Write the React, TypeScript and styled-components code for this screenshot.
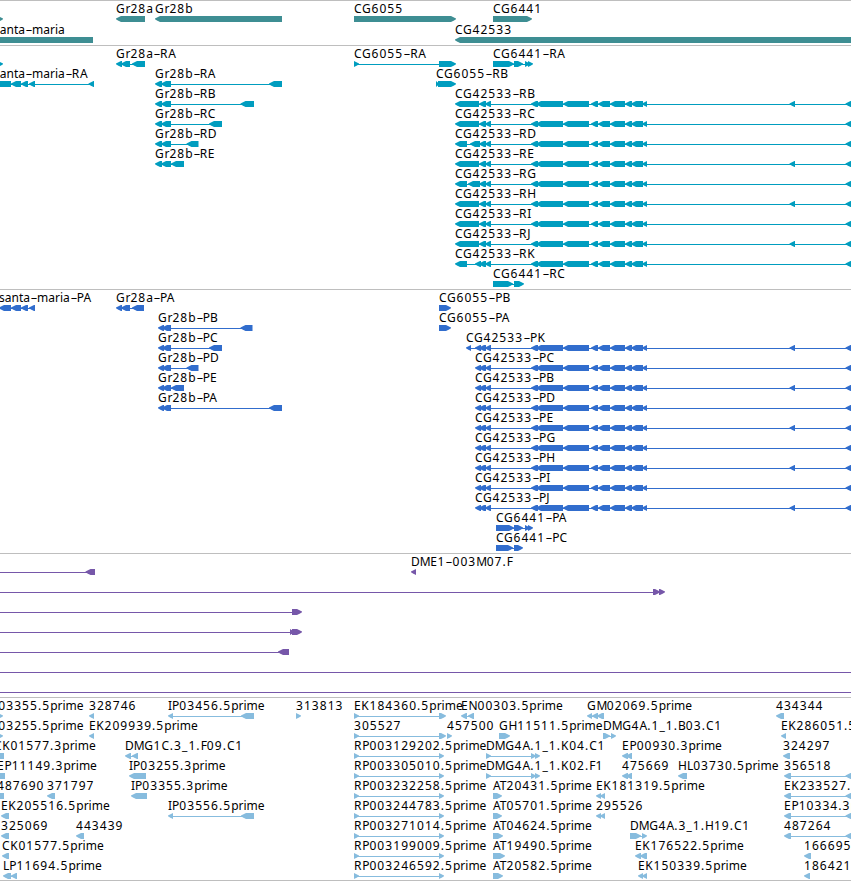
import React from "react";
import styled, { createGlobalStyle } from "styled-components";

type Block = [number, number];

interface FeatureData {
  at: number;
  label?: string;
  blocks: Block[];
  forward?: boolean;
}

interface TrackData {
  id: string;
  color: string;
  pitch: number;
  height: number;
  rows: FeatureData[][];
}

const GlobalStyle = createGlobalStyle`
  body {
    margin: 0;
    background: #fff;
  }
`;

const Browser = styled.main`
  width: 851px;
  height: 881px;
  overflow: hidden;
  display: flex;
  flex-direction: column;
  background: #fff;
  color: #000;
  font-family: "Noto Sans", "Open Sans", sans-serif;
  font-size: 12px;
`;

const TrackBox = styled.section<{ $height: number; $color: string }>`
  flex: none;
  box-sizing: border-box;
  height: ${(p) => p.$height}px;
  border-top: 1px solid #bebebe;
  color: ${(p) => p.$color};
`;

const EndLine = styled.div`
  flex: none;
  height: 1px;
  background: #bebebe;
`;

const Row = styled.div<{ $pitch: number }>`
  position: relative;
  height: ${(p) => p.$pitch}px;
`;

const FeatureBox = styled.div`
  position: absolute;
  top: 0;
  display: flex;
  flex-direction: column;
`;

const Label = styled.span`
  height: 15px;
  line-height: 15px;
  white-space: pre;
  color: #000;
`;

const Run = styled.span<{ $spacing: number }>`
  letter-spacing: ${(p) => p.$spacing}px;
`;

const Dash = styled.span`
  display: inline-block;
  width: 4px;
  margin: 0 1px 0 2px;
  transform: scaleX(1.8);
`;

const Glyph = styled.svg`
  display: block;
  flex: none;
  overflow: visible;
`;

const f = (at: number, label: string, blocks: Block[], forward = false): FeatureData => ({
  at,
  label,
  blocks,
  forward,
});

const r = (at: number, label: string, blocks: Block[]) => f(at, label, blocks, true);

// exons shared by every CG42533 isoform
const common = (extra: boolean): Block[] => [
  [479, 486],
  [485, 491],
  [531, 538],
  [536, 563],
  [563, 589],
  [591, 598],
  [598, 610],
  [610, 625],
  [625, 632],
  [631, 643],
  [642, 647],
  ...((extra ? [[789.5, 795]] : []) as Block[]),
  [845.5, 860],
];

const cgR = (suffix: string, extra: boolean, head: Block[] = [[455, 479]]) =>
  f(455, `CG42533-R${suffix}`, [...head, ...common(extra)]);

const cgP = (suffix: string, extra: boolean) =>
  f(475, `CG42533-P${suffix}`, [[475, 481], ...common(extra)]);

const gr28R = (suffix: string, last: Block) =>
  f(155, `Gr28b-R${suffix}`, [[155, 162], [161, 171], last]);

const gr28P = (suffix: string, last: Block) =>
  f(158, `Gr28b-P${suffix}`, [[158, 164], [162, 171], last]);

const rp = (n: string) => r(354, `RP003${n}.5prime`, [[354, 359], [439, 444]]);
const at = (n: string, end: number) => r(493, `AT${n}.5prime`, [[493, end]]);
const far = (label: string) => f(784, label, [[784, 791], [845.5, 860]]);

const tracks: TrackData[] = [
  {
    id: "genes",
    color: "#3e8e93",
    pitch: 21,
    height: 45,
    rows: [
      [
        r(-10, "", [[-10, 3]]),
        f(116, "Gr28a", [[116, 145]]),
        f(155, "Gr28b", [[155, 282]]),
        r(354, "CG6055", [[354, 456]]),
        r(493, "CG6441", [[493, 532]]),
      ],
      [f(-6, "santa-maria", [[-6, 93]]), f(455, "CG42533", [[455, 860]])],
    ],
  },
  {
    id: "transcripts",
    color: "#009dbf",
    pitch: 20,
    height: 244,
    rows: [
      [
        r(-10, "", [[-10, 3]]),
        f(116, "Gr28a-RA", [[116, 122], [121, 130], [132, 145]]),
        r(354, "CG6055-RA", [[354, 359], [439, 456]]),
        r(493, "CG6441-RA", [[493, 514], [514, 523], [525, 530], [528, 533]]),
      ],
      [
        f(-6, "santa-maria-RA", [[-7, 11], [11, 21], [21, 28], [29, 35], [88.5, 94]]),
        gr28R("A", [269, 282]),
        r(436, "CG6055-RB", [[436, 439], [438, 456]]),
      ],
      [gr28R("B", [240.5, 254]), cgR("B", true)],
      [gr28R("C", [209, 222]), cgR("C", false)],
      [gr28R("D", [186.5, 198.5]), cgR("D", false, [[455, 467], [470, 480]])],
      [gr28R("E", [171, 184]), cgR("E", true)],
      [cgR("G", false, [[455, 467], [468, 480]])],
      [cgR("H", true)],
      [cgR("I", false)],
      [cgR("J", true)],
      [cgR("K", false, [[455, 467], [475, 481]])],
      [r(493, "CG6441-RC", [[493, 513], [514, 524]])],
    ],
  },
  {
    id: "proteins",
    color: "#316dcd",
    pitch: 20,
    height: 264,
    rows: [
      [
        f(-1, "santa-maria-PA", [[-1, 11], [11, 21], [21, 28], [29, 35]]),
        f(116, "Gr28a-PA", [[116, 122], [121, 130], [132, 144]]),
        r(439, "CG6055-PB", [[439, 451]]),
      ],
      [gr28P("B", [240.5, 252.5]), r(439, "CG6055-PA", [[439, 451]])],
      [gr28P("C", [209, 222]), f(466, "CG42533-PK", [[466, 471], [475, 481], ...common(true)])],
      [gr28P("D", [186.5, 198.5]), cgP("C", false)],
      [gr28P("E", [171, 184]), cgP("B", true)],
      [gr28P("A", [269, 282]), cgP("D", false)],
      [cgP("E", true)],
      [cgP("G", false)],
      [cgP("H", true)],
      [cgP("I", false)],
      [cgP("J", true)],
      [r(496, "CG6441-PA", [[496, 514], [514, 523], [525, 530], [528, 533]])],
      [r(496, "CG6441-PC", [[496, 513], [514, 523]])],
    ],
  },
  {
    id: "clones",
    color: "#7657a9",
    pitch: 20,
    height: 144,
    rows: [
      [f(-10, "", [[-10, -5], [85.5, 95]]), f(411, "DME1-003M07.F", [[411, 416]])],
      [r(-10, "", [[-10, -5], [653, 660], [659, 665]])],
      [r(-10, "", [[-10, -5], [292, 302]])],
      [r(-10, "", [[-10, -5], [290, 294], [292, 302]])],
      [f(-10, "", [[-10, -5], [278, 289]])],
      [f(-10, "", [[-10, -5], [860, 870]])],
      [f(-10, "", [[-10, -5], [860, 870]])],
    ],
  },
  {
    id: "ests",
    color: "#87bcde",
    pitch: 20,
    height: 183,
    rows: [
      [
        r(-13, "IP03355.5prime", [[-13, 3]]),
        f(89, "328746", [[89, 94]]),
        f(168, "IP03456.5prime", [[168, 173], [241, 254]]),
        r(296, "313813", [[296, 301]]),
        r(354, "EK184360.5prime", [[354, 359], [439, 446]]),
        f(461, "EN00303.5prime", [[461, 467], [468, 474]]),
        f(587, "GM02069.5prime", [[587, 592], [592, 598], [597, 604]]),
        f(776, "434344", [[776, 784]]),
      ],
      [
        r(-13, "IP03255.5prime", [[-13, 3]]),
        f(89, "EK209939.5prime", [[89, 94]]),
        r(354, "305527", [[354, 359], [439, 446]]),
        r(447, "457500", [[447, 452]]),
        r(499, "GH11511.5prime", [[499, 510]]),
        r(603, "DMG4A.1_1.B03.C1", [[603, 610], [611, 616]]),
        f(781, "EK286051.5prime", [[781, 786]]),
      ],
      [
        f(-6, "CK01577.3prime", [[-7, 4]]),
        f(125, "DMG1C.3_1.F09.C1", [[125, 131], [132, 138]]),
        rp("129202"),
        r(486, "DMG4A.1_1.K04.C1", [[486, 491], [531, 536], [535, 540]]),
        f(622, "EP00930.3prime", [[622, 628], [626, 632]]),
        f(783, "324297", [[783, 790]]),
      ],
      [
        f(-3, "EP11149.3prime", [[-6, 5]]),
        f(129, "IP03255.3prime", [[129, 146]]),
        rp("305010"),
        r(486, "DMG4A.1_1.K02.F1", [[486, 491], [531, 536], [535, 540]]),
        f(622, "475669", [[622, 628], [626, 632]]),
        f(678, "HL03730.5prime", [[678, 687]]),
        far("356518"),
      ],
      [
        f(-3, "487690", [[-5, 4]]),
        f(47, "371797", [[47, 55]]),
        f(131, "IP03355.3prime", [[131, 147]]),
        rp("232258"),
        at("20431", 502),
        f(596, "EK181319.5prime", [[596, 601], [600, 605]]),
        far("EK233527.5prime"),
      ],
      [
        f(1, "EK205516.5prime", [[1, 9]]),
        f(168, "IP03556.5prime", [[168, 173], [241, 254]]),
        rp("244783"),
        at("05701", 502),
        f(596, "295526", [[596, 601], [600, 605]]),
        far("EP10334.3prime"),
      ],
      [
        f(1, "325069", [[1, 9]]),
        f(76, "443439", [[76, 84]]),
        rp("271014"),
        at("04624", 503),
        r(630, "DMG4A.3_1.H19.C1", [[630, 641], [642, 647]]),
        far("487264"),
      ],
      [
        f(2, "CK01577.5prime", [[2, 9]]),
        rp("199009"),
        at("19490", 505),
        f(635, "EK176522.5prime", [[635, 641], [640, 647]]),
        f(804, "166695", [[804, 811]]),
      ],
      [
        f(3, "LP11694.5prime", [[3, 11], [11, 17]]),
        rp("246592"),
        at("20582", 503),
        f(638, "EK150339.5prime", [[638, 643], [642, 647]]),
        f(804, "186421", [[804, 810]]),
      ],
    ],
  },
];

function blockPoints([start, end]: Block, forward?: boolean) {
  const head = Math.min(5, end - start);
  if (forward) {
    const neck = end - head;
    return `${start},0 ${neck},0 ${neck + head * 0.6},1.4 ${end},2.5 ${end},3.2 ${neck + head * 0.6},4.6 ${neck},6 ${start},6`;
  }
  const neck = start + head;
  return `${end},0 ${neck},0 ${neck - head * 0.6},1.4 ${start},2.5 ${start},3.2 ${neck - head * 0.6},4.6 ${neck},6 ${end},6`;
}

function runSpacing(run: string) {
  if (/^[0-9._]/.test(run)) return 1.06;
  if (/^[CG]/.test(run)) return 0.7;
  if (/^[EKR]/.test(run)) return 0.7;
  if (/^M/.test(run)) return -0.5;
  return 0;
}

function LabelText({ text }: { text: string }) {
  const runs = text.match(/[0-9._]+|[CG]+|[EKR]+|M|-|[^0-9._CGEKRM-]+/g) || [];
  return (
    <Label>
      {runs.map((run, i) =>
        run === "-" ? (
          <Dash key={i}>-</Dash>
        ) : (
          <Run key={i} $spacing={runSpacing(run)}>
            {run}
          </Run>
        )
      )}
    </Label>
  );
}

function Feature({ feature }: { feature: FeatureData }) {
  const { at: left, label, blocks, forward } = feature;
  const start = blocks[0][0];
  const end = blocks[blocks.length - 1][1];
  return (
    <FeatureBox style={{ left }}>
      <LabelText text={label || ""} />
      <Glyph width={end - left} height={6} viewBox={`${left} 0 ${end - left} 6`}>
        {blocks.length > 1 && (
          <rect x={start + 2} y={3} width={end - start - 4} height={1} fill="currentColor" />
        )}
        {blocks.map((block, i) => (
          <polygon key={i} points={blockPoints(block, forward)} fill="currentColor" />
        ))}
      </Glyph>
    </FeatureBox>
  );
}

export default function App() {
  return (
    <Browser>
      <GlobalStyle />
      {tracks.map((track) => (
        <TrackBox key={track.id} $height={track.height} $color={track.color}>
          {track.rows.map((row, i) => (
            <Row key={i} $pitch={track.pitch}>
              {row.map((feature, j) => (
                <Feature key={j} feature={feature} />
              ))}
            </Row>
          ))}
        </TrackBox>
      ))}
      <EndLine />
    </Browser>
  );
}
